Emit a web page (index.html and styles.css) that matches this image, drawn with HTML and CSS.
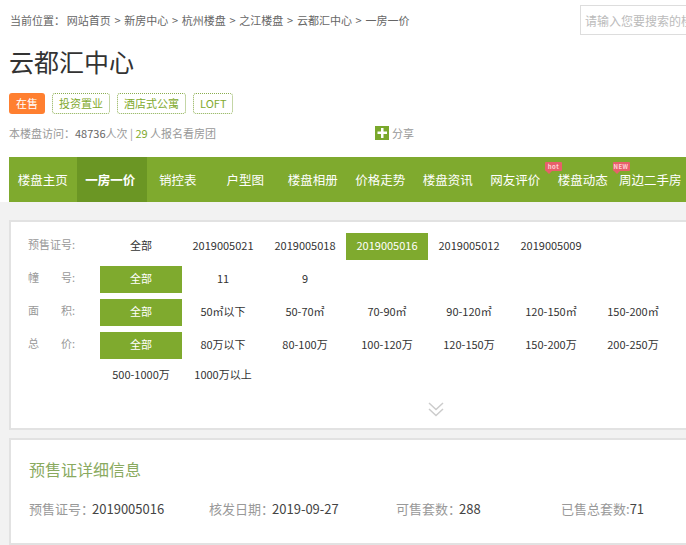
FILE: index.html
```html
<!DOCTYPE html>
<html lang="zh-CN">
<head>
    <meta charset="UTF-8">
    <title>云都汇中心 - 一房一价</title>
    <link rel="stylesheet" href="styles.css">
</head>
<body>
    <div class="top">
        <div class="crumbs">
            <div class="crumb-links">
                <span class="crumb-label">当前位置：</span>
                <a href="#">网站首页</a> &gt;
                <a href="#">新房中心</a> &gt;
                <a href="#">杭州楼盘</a> &gt;
                <a href="#">之江楼盘</a> &gt;
                <a href="#">云都汇中心</a> &gt;
                <a href="#">一房一价</a>
            </div>
            <input class="search" type="text" placeholder="请输入您要搜索的楼盘名称">
        </div>

        <h1 class="title">云都汇中心</h1>

        <div class="tags">
            <span class="tag tag-sale">在售</span>
            <span class="tag">投资置业</span>
            <span class="tag">酒店式公寓</span>
            <span class="tag">LOFT</span>
        </div>

        <div class="stats">
            <p class="visits">本楼盘访问：<b>48736</b>人次 | <em>29</em> 人报名看房团</p>
            <a class="share" href="#">
                <svg width="14" height="14" viewBox="0 0 14 14">
                    <rect width="14" height="14" fill="#7aa82c"/>
                    <path d="M6 2h2.500v3.500H12V8H8.500v4H6V8H2.500V5.500H6z" fill="#fff"/>
                </svg>
                分享
            </a>
        </div>
    </div>

    <nav class="nav">
        <a href="#">楼盘主页</a>
        <a class="active" href="#">一房一价</a>
        <a href="#">销控表</a>
        <a href="#">户型图</a>
        <a href="#">楼盘相册</a>
        <a href="#">价格走势</a>
        <a href="#">楼盘资讯</a>
        <a href="#">网友评价<span class="badge">hot</span></a>
        <a href="#">楼盘动态<span class="badge">NEW</span></a>
        <a href="#">周边二手房</a>
    </nav>

    <div class="main">
        <section class="card filters">
            <div class="filter-row">
                <div class="filter-label">预售证号:</div>
                <div class="options">
                    <a href="#">全部</a>
                    <a href="#">2019005021</a>
                    <a href="#">2019005018</a>
                    <a class="on" href="#">2019005016</a>
                    <a href="#">2019005012</a>
                    <a href="#">2019005009</a>
                </div>
            </div>
            <div class="filter-row">
                <div class="filter-label split"><span>幢</span><span>号:</span></div>
                <div class="options">
                    <a class="on" href="#">全部</a>
                    <a href="#">11</a>
                    <a href="#">9</a>
                </div>
            </div>
            <div class="filter-row">
                <div class="filter-label split"><span>面</span><span>积:</span></div>
                <div class="options">
                    <a class="on" href="#">全部</a>
                    <a href="#">50㎡以下</a>
                    <a href="#">50-70㎡</a>
                    <a href="#">70-90㎡</a>
                    <a href="#">90-120㎡</a>
                    <a href="#">120-150㎡</a>
                    <a href="#">150-200㎡</a>
                </div>
            </div>
            <div class="filter-row">
                <div class="filter-label split"><span>总</span><span>价:</span></div>
                <div class="options">
                    <a class="on" href="#">全部</a>
                    <a href="#">80万以下</a>
                    <a href="#">80-100万</a>
                    <a href="#">100-120万</a>
                    <a href="#">120-150万</a>
                    <a href="#">150-200万</a>
                    <a href="#">200-250万</a>
                    <a href="#">500-1000万</a>
                    <a href="#">1000万以上</a>
                </div>
            </div>
            <div class="more">
                <svg width="16" height="15" viewBox="0 0 16 15" fill="none" stroke="#ccc" stroke-width="1.500">
                    <path d="M1 1l7 6.500L15 1"/>
                    <path d="M1 7l7 6.500L15 7"/>
                </svg>
            </div>
        </section>

        <section class="card detail">
            <h2>预售证详细信息</h2>
            <div class="detail-grid">
                <div>预售证号：<b>2019005016</b></div>
                <div>核发日期：<b>2019-09-27</b></div>
                <div>可售套数：<b>288</b></div>
                <div>已售总套数:<b class="sold">71</b></div>
            </div>
        </section>
    </div>
</body>
</html>
```

FILE: styles.css
```css
html, body {
    height: 545px;
    overflow: hidden;
}

body {
    margin: 0;
    width: 686px;
    font-family: "Noto Sans CJK SC", "Liberation Sans", sans-serif;
    font-size: 11px;
    color: #666;
    background: #fff;
}

a {
    color: inherit;
    text-decoration: none;
}

.top {
    padding: 5px 0 0 10px;
    height: 157px;
    box-sizing: border-box;
}

.crumbs {
    display: flex;
    height: 30px;
    width: 780px;
}

.crumb-links {
    width: 570px;
    flex-shrink: 0;
    line-height: 30px;
    word-spacing: 1.25px;
}

.crumb-label {
    margin-right: -2px;
}

.search {
    width: 200px;
    height: 30px;
    box-sizing: border-box;
    border: 1px solid #ddd;
    padding: 0 4px;
    font-family: inherit;
    font-size: 12px;
    outline: none;
}

.search::placeholder {
    color: #bbb;
}

.title {
    margin: 8px 0 0 -1px;
    font-size: 25px;
    line-height: 36px;
    font-weight: normal;
    color: #333;
}

.tags {
    display: flex;
    gap: 7px;
    margin: 14px 0 0 -1px;
}

.tag {
    height: 21px;
    line-height: 19px;
    box-sizing: border-box;
    padding: 0 6px;
    border: 1px dotted #8aad4e;
    border-radius: 3px;
    color: #7faa2e;
}

.tag-sale {
    width: 36px;
    padding: 0;
    text-align: center;
    color: #fff;
    background: #ff7f30;
    border: none;
    line-height: 21px;
}

.stats {
    display: flex;
    align-items: center;
    margin: 11px 0 0 -1px;
    height: 16px;
}

.visits {
    margin: 0;
    width: 366px;
    color: #999;
}

.visits b {
    font-weight: normal;
    color: #666;
}

.visits em {
    font-style: normal;
    color: #7faa2e;
}

.share {
    display: flex;
    align-items: center;
    gap: 3px;
    color: #999;
}

.nav {
    display: flex;
    margin-left: 9px;
    height: 45px;
    background: #7faa2e;
    width: 760px;
}

.nav a {
    position: relative;
    width: 67.5px;
    flex-shrink: 0;
    text-align: center;
    line-height: 45px;
    font-size: 12.5px;
    color: #fff;
}

.nav a.active {
    font-weight: bold;
    background: #6b9624;
    padding-right: 2.5px;
    margin-right: -2.5px;
}

.badge {
    position: absolute;
    top: 5px;
    right: -13px;
    width: 17px;
    height: 9px;
    line-height: 9px;
    font-size: 6px;
    font-weight: bold;
    letter-spacing: 0.5px;
    text-align: center;
    color: #ffd5d8;
    background: #e8606a;
    border-radius: 1px;
}

.badge::after {
    content: "";
    position: absolute;
    left: 1px;
    top: 9px;
    border: 3px solid transparent;
    border-top-color: #e8606a;
    border-bottom: none;
}

.main {
    background: #f2f2f2;
    padding: 18px 0 0 9px;
    height: 343px;
    box-sizing: border-box;
}

.card {
    width: 760px;
    box-sizing: border-box;
    background: #fff;
    border: 2px solid #e2e2e2;
    border-right: none;
}

.filters {
    height: 210px;
    padding: 11px 0 0 17px;
}

.filter-row {
    display: flex;
    margin-bottom: 3px;
}

.filter-label {
    width: 47px;
    flex-shrink: 0;
    margin-right: 25px;
    line-height: 23px;
    white-space: nowrap;
    color: #999;
}

.split {
    display: flex;
    justify-content: space-between;
}

.options {
    display: grid;
    grid-template-columns: repeat(7, 82px);
}

.options a {
    height: 27px;
    line-height: 25px;
    margin-bottom: 3px;
    text-align: center;
    color: #333;
}

.options a.on {
    background: #7faa2e;
    color: #fff;
}

.more {
    position: absolute;
    left: 428px;
    top: 402px;
    line-height: 0;
}

.detail {
    height: 107px;
    margin-top: 8px;
    padding: 17px 0 0 18px;
}

.detail h2 {
    margin: 0;
    font-size: 16px;
    line-height: 24px;
    font-weight: normal;
    color: #8aaa5f;
}

.detail-grid {
    display: grid;
    grid-template-columns: 180px 187px 165px 150px;
    margin-top: 16px;
    font-size: 13px;
    line-height: 24px;
    color: #999;
}

.detail-grid b {
    font-weight: normal;
    margin-left: -2px;
    color: #444;
}

.detail-grid b.sold {
    margin-left: 0;
}
```
